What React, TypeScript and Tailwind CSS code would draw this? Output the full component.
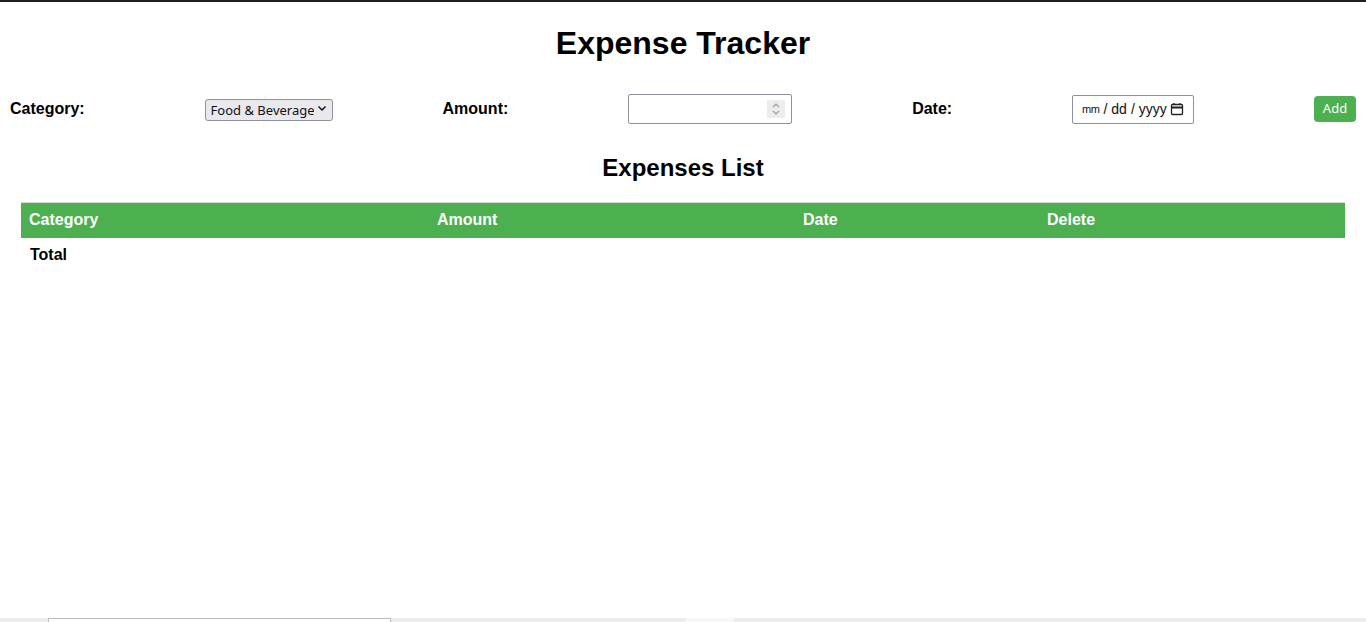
import React, { useState } from 'react';

type Expense = { category: string; amount: number; date: string };

const App: React.FC = () => {
    const [category, setCategory] = useState('Food & Beverage');
    const [amount, setAmount] = useState('');
    const [date, setDate] = useState('');
    const [expenses, setExpenses] = useState<Expense[]>([]);

    const handleAdd = () => {
        const value = parseFloat(amount);
        if (!value || !date) return;
        setExpenses([...expenses, { category, amount: value, date }]);
        setAmount('');
        setDate('');
    };

    const total = expenses.reduce((sum, e) => sum + e.amount, 0);

    return (
        <div className="min-h-screen flex flex-col bg-white text-black font-['Liberation_Sans',Arial,sans-serif]">
            <div className="h-[2px] bg-[#1f1f1f]" />

            <h1 className="text-[32px] font-bold text-center mt-[23px] leading-[37px]">Expense Tracker</h1>

            <div className="flex items-center justify-between px-[10px] mt-[32px] h-[30px]">
                <label className="font-bold text-base">Category:</label>
                <div className="relative w-[128px] h-[22px]">
                    <select
                        value={category}
                        onChange={(e) => setCategory(e.target.value)}
                        className="appearance-none w-full h-full text-[13px] text-[#111] bg-[#e9e9ed] border border-[#8f8f9d] rounded-[3px] pl-[5px] pr-[18px] font-['Noto_Sans',sans-serif] leading-[20px]"
                    >
                        <option>Food &amp; Beverage</option>
                        <option>Rent</option>
                        <option>Transport</option>
                        <option>Relaxing</option>
                    </select>
                    <svg className="absolute right-[6px] top-[7px] pointer-events-none" width="10" height="7" viewBox="0 0 10 7" fill="none" stroke="#111" strokeWidth="1.5">
                        <path d="M1.5 1.5 L5 5 L8.5 1.5" />
                    </svg>
                </div>
                <label className="font-bold text-base ml-[-10px]">Amount:</label>
                <div className="relative w-[164px] h-[30px] border border-[#8f8f9d] rounded-[2px]">
                    <input
                        type="text"
                        value={amount}
                        onChange={(e) => setAmount(e.target.value)}
                        className="w-full h-full px-[4px] text-[13px] outline-none"
                    />
                    <div className="absolute right-[6px] top-[5px] w-[18px] h-[18px] bg-[#ececec] flex items-center justify-center">
                        <svg width="10" height="14" viewBox="0 0 10 14" fill="none" stroke="#9a9a9a" strokeWidth="1.2">
                            <path d="M2 5 L5 2 L8 5" />
                            <path d="M2 9 L5 12 L8 9" />
                        </svg>
                    </div>
                </div>
                <label className="font-bold text-base">Date:</label>
                <div className="w-[122px] h-[29px] border border-[#8f8f9d] rounded-[2px] flex items-center pl-[9px] pr-[9px] text-[14px] text-[#111] font-['Liberation_Sans',Arial,sans-serif] whitespace-nowrap">
                    <span className="text-[11px] tracking-[-0.5px]">mm</span>
                    <span className="mx-[4px]">/</span>
                    <span>dd</span>
                    <span className="mx-[4px]">/</span>
                    <span>yyyy</span>
                    <svg className="ml-auto shrink-0" width="14" height="14" viewBox="0 0 14 14" fill="none" stroke="#222" strokeWidth="1.3">
                        <rect x="1.5" y="2.5" width="11" height="10" rx="1" />
                        <path d="M1.5 5.5 H12.5" strokeWidth="2" />
                        <path d="M4 1 V3 M10 1 V3" />
                    </svg>
                </div>
                <button
                    onClick={handleAdd}
                    className="w-[42px] h-[26px] bg-[#4caf50] text-white text-[13px] rounded-[4px] font-['Noto_Sans',sans-serif]"
                >
                    Add
                </button>
            </div>

            <h2 className="text-2xl font-bold text-center mt-[30px] leading-[28px]">Expenses List</h2>

            <div className="px-[21px] mt-[20px]">
                <table className="w-full border-collapse text-left">
                    <thead>
                        <tr className="bg-[#4caf50] text-white h-[35px] border-t border-[#d6d6d6]">
                            <th className="pl-[8px] w-[407px] font-bold">Category</th>
                            <th className="pl-[9px] w-[366px] font-bold">Amount</th>
                            <th className="pl-[9px] w-[244px] font-bold">Date</th>
                            <th className="pl-[9px] font-bold">Delete</th>
                        </tr>
                    </thead>
                    <tbody>
                        {expenses.map((e, i) => (
                            <tr key={i} className="h-[33px]">
                                <td className="pl-[9px]">{e.category}</td>
                                <td className="pl-[9px]">{e.amount}</td>
                                <td className="pl-[9px]">{e.date}</td>
                                <td className="pl-[9px]">
                                    <button onClick={() => setExpenses(expenses.filter((_, j) => j !== i))} className="text-red-600">
                                        Delete
                                    </button>
                                </td>
                            </tr>
                        ))}
                        <tr className="h-[35px]">
                            <td className="pl-[9px] font-bold">Total</td>
                            <td className="pl-[9px]">{total > 0 ? total : ''}</td>
                            <td />
                            <td />
                        </tr>
                    </tbody>
                </table>
            </div>

            <div className="mt-auto h-[4px] flex bg-[#ececec]">
                <div className="w-[48px]" />
                <div className="w-[343px] bg-white border-t border-x border-[#bdbdbd]" />
                <div className="w-[295px]" />
                <div className="w-[48px] bg-[#f7f7f7]" />
            </div>
        </div>
    );
};

export default App;
